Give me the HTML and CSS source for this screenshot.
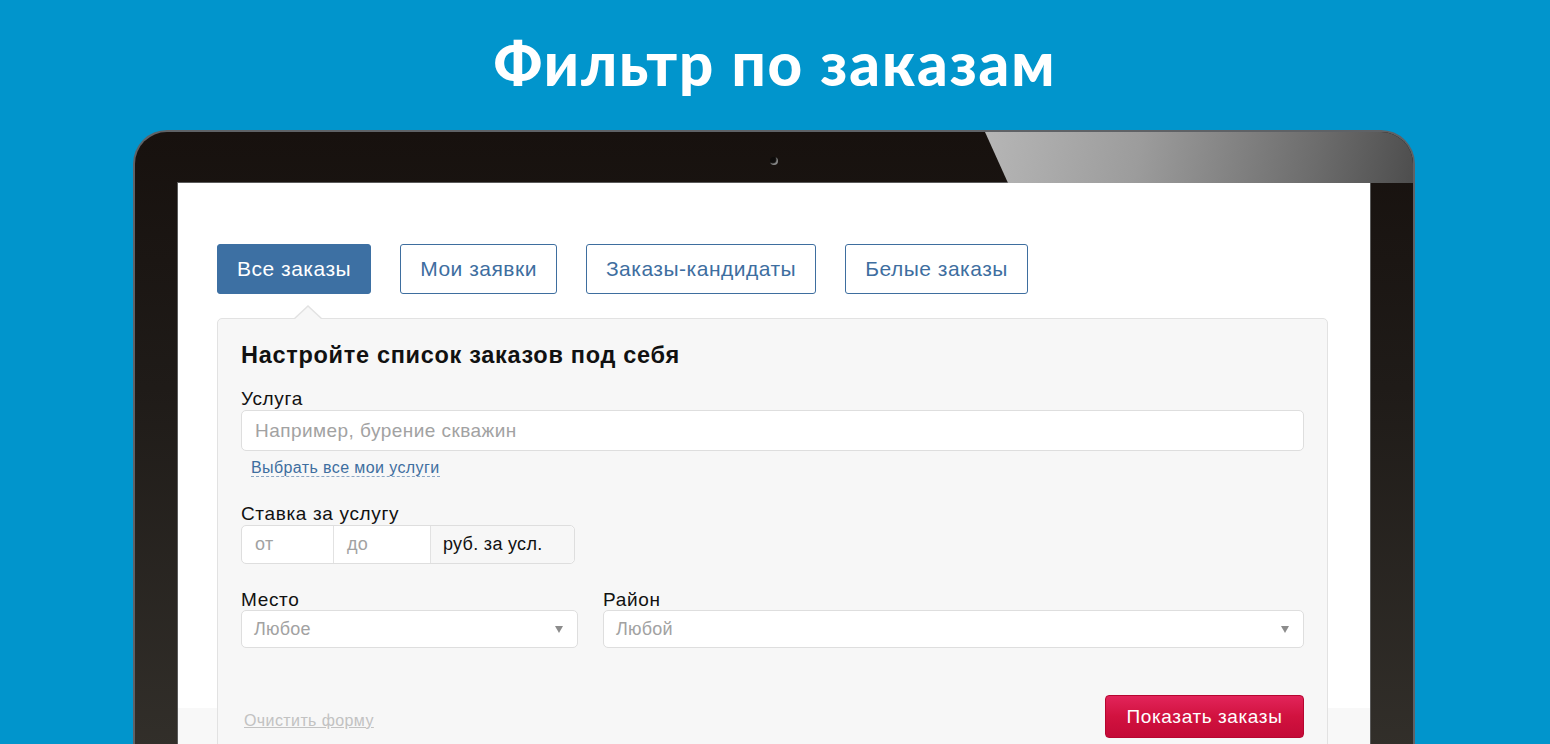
FILE: index.html
```html
<!DOCTYPE html>
<html lang="ru">
<head>
<meta charset="utf-8">
<title>Фильтр по заказам</title>
<link rel="stylesheet" href="styles.css">
</head>
<body>
<h1 class="title">Фильтр по заказам</h1>
<div class="laptop">
  <div class="glare"></div>
  <div class="camera"></div>
  <div class="screen">
    <div class="tabs">
      <a class="tab active">Все заказы</a>
      <a class="tab">Мои заявки</a>
      <a class="tab">Заказы-кандидаты</a>
      <a class="tab">Белые заказы</a>
    </div>
    <div class="panel">
      <h2 class="panel-title">Настройте список заказов под себя</h2>
      <div class="field">
        <label class="label">Услуга</label>
        <div class="input wide"><span class="ph">Например, бурение скважин</span></div>
        <div class="link-row"><a class="dash-link">Выбрать все мои услуги</a></div>
      </div>
      <div class="field rate">
        <label class="label">Ставка за услугу</label>
        <div class="group">
          <div class="cell from"><span class="ph">от</span></div>
          <div class="cell to"><span class="ph">до</span></div>
          <div class="cell addon">руб. за усл.</div>
        </div>
      </div>
      <div class="row2">
        <div class="field place">
          <label class="label">Место</label>
          <div class="input select"><span class="ph">Любое</span><span class="caret"></span></div>
        </div>
        <div class="field district">
          <label class="label">Район</label>
          <div class="input select"><span class="ph">Любой</span><span class="caret"></span></div>
        </div>
      </div>
      <div class="actions">
        <a class="clear">Очистить форму</a>
        <button class="submit">Показать заказы</button>
      </div>
    </div>
  </div>
</div>
</body>
</html>
```
FILE: styles.css
```css
html, body {
  margin: 0;
  padding: 0;
}
body {
  background: #0195cc;
  height: 744px;
  overflow: hidden;
  font-family: "Liberation Sans", Arial, sans-serif;
}
.title {
  margin: 0;
  height: 130px;
  box-sizing: border-box;
  padding-top: 28px;
  text-align: center;
  color: #fff;
  font-family: "Lato", "Open Sans", sans-serif;
  font-weight: 900;
  font-size: 60px;
  line-height: 70px;
  letter-spacing: 1.9px;
}
.laptop {
  position: relative;
  width: 1282px;
  height: 640px;
  margin: 0 0 0 133px;
  box-sizing: border-box;
  background: linear-gradient(180deg, #17110e 0%, #1f1b18 40%, #33302b 100%);
  border: 2px solid #5f6266;
  border-bottom: none;
  border-radius: 34px 34px 0 0;
  padding: 51px 43px 0 43px;
  overflow: hidden;
}
.glare {
  position: absolute;
  top: 0;
  left: 850px;
  width: 440px;
  height: 51px;
  background: linear-gradient(100deg, #b6b6b6 0%, #9c9c9c 35%, #6c6c6c 75%, #4a4a4a 100%);
  clip-path: polygon(0 0, 100% 0, 100% 100%, 23px 100%);
}
.camera {
  position: absolute;
  top: 25px;
  left: 635px;
  width: 8px;
  height: 8px;
  border-radius: 50%;
  background: #0e0c0b;
  box-shadow: inset -1.5px -1.5px 1px #8a8a8a;
}
.screen {
  background: linear-gradient(180deg, #fff 0, #fff 525px, #f8f8f8 525px);
  height: 100%;
  box-sizing: border-box;
  padding: 61px 42px 0 39px;
  box-shadow: 0 0 0 1px #5a5a5a;
}
.tabs {
  display: flex;
  gap: 29px;
  margin-bottom: 24px;
}
.tab {
  display: flex;
  align-items: center;
  height: 50px;
  box-sizing: border-box;
  padding: 0 19px;
  border: 1.5px solid #3e6e9f;
  border-radius: 3px;
  color: #3e6e9f;
  font-size: 21px;
  letter-spacing: 0.5px;
  background: #fff;
}
.tab.active {
  background: #3d70a3;
  border-color: #3d70a3;
  color: #fff;
}
.panel {
  position: relative;
  background: #f7f7f7;
  border: 1px solid #e2e2e2;
  border-radius: 5px;
  padding: 22px 23px 0 23px;
  height: 500px;
}
.panel::before {
  content: "";
  position: absolute;
  top: -14px;
  left: 75px;
  width: 0;
  height: 0;
  border-left: 15px solid transparent;
  border-right: 15px solid transparent;
  border-bottom: 14px solid #e2e2e2;
}
.panel::after {
  content: "";
  position: absolute;
  top: -12.5px;
  left: 76px;
  width: 0;
  height: 0;
  border-left: 14px solid transparent;
  border-right: 14px solid transparent;
  border-bottom: 13px solid #f7f7f7;
}
.panel-title {
  margin: 0 0 20px 0;
  font-size: 23.5px;
  letter-spacing: 0.7px;
  font-weight: 700;
  color: #111;
  line-height: 28px;
}
.label {
  display: block;
  font-size: 19px;
  letter-spacing: 0.65px;
  color: #111;
  line-height: 20px;
  margin-bottom: 1px;
}
.input {
  height: 41px;
  box-sizing: border-box;
  background: #fff;
  border: 1px solid #dedede;
  border-radius: 5px;
  display: flex;
  align-items: center;
  padding: 0 13px;
}
.ph {
  color: #a2a2a2;
  font-size: 19px;
  letter-spacing: 0.45px;
}
.link-row {
  box-sizing: border-box;
  padding: 8px 0 0 10px;
  height: 25px;
}
.dash-link {
  color: #3e6e9f;
  font-size: 16px;
  letter-spacing: 0.4px;
  border-bottom: 1px dashed #8aa6c4;
  line-height: 17px;
}
.field.rate {
  margin-top: 28px;
}
.group {
  display: flex;
  width: 334px;
  height: 39px;
  box-sizing: border-box;
  border: 1px solid #dedede;
  border-radius: 5px;
  background: #fff;
}
.cell {
  display: flex;
  align-items: center;
  box-sizing: border-box;
  padding: 0 13px;
}
.cell.from {
  width: 92px;
  border-right: 1px solid #e2e2e2;
}
.cell.to {
  width: 97px;
  border-right: 1px solid #e2e2e2;
}
.cell .ph {
  font-size: 18px;
  letter-spacing: 0.3px;
}
.cell.addon {
  flex: 1;
  background: #f7f7f7;
  border-radius: 0 5px 5px 0;
  color: #111;
  font-size: 18px;
  letter-spacing: 0.3px;
  padding-left: 12px;
}
.row2 {
  display: flex;
  gap: 25px;
  margin-top: 26px;
}
.field.place {
  width: 337px;
}
.field.district {
  flex: 1;
}
.select {
  height: 38px;
  margin-top: -1px;
  justify-content: space-between;
  padding: 0 12px 0 12px;
}
.select .ph {
  font-size: 18px;
  letter-spacing: 0.2px;
}
.caret {
  width: 0;
  height: 0;
  border-left: 4px solid transparent;
  border-right: 4px solid transparent;
  border-top: 7px solid #8c8c8c;
  margin-right: 2px;
}
.actions {
  display: flex;
  justify-content: space-between;
  align-items: flex-start;
  margin-top: 47px;
}
.clear {
  margin-top: 17px;
  margin-left: 3px;
  color: #c2c2c2;
  font-size: 16px;
  letter-spacing: 0.4px;
  text-decoration: underline;
}
.submit {
  height: 43px;
  width: 199px;
  border: 1px solid #b60630;
  border-radius: 4px;
  background: linear-gradient(180deg, #e2245a 0%, #d1123f 50%, #c40a37 100%);
  color: #fff;
  font-family: "Liberation Sans", Arial, sans-serif;
  font-size: 19px;
  letter-spacing: 0.6px;
  padding: 0;
}
```
